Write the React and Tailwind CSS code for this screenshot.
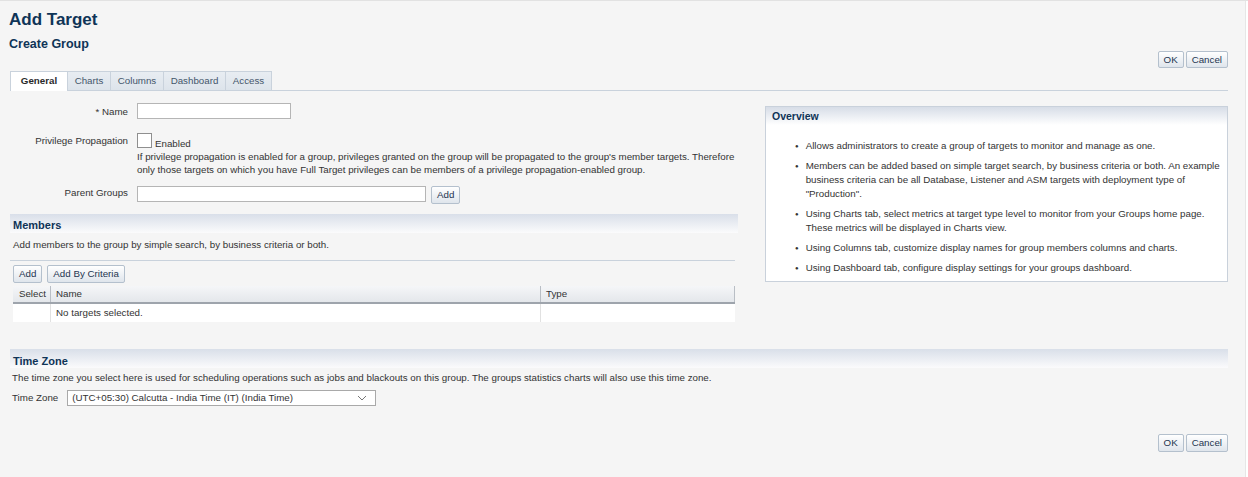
import React from 'react';

function Btn({ children, className = '' }) {
  return (
    <button
      className={`h-[17px] px-[5px] text-[9.75px] leading-none text-[#1f3550] border border-[#b4c0cd] rounded-[2px] bg-gradient-to-b from-[#ffffff] to-[#dfe5ec] ${className}`}
    >
      {children}
    </button>
  );
}

function SectionHeader({ title }) {
  return (
    <div className="h-[19px] flex items-center pl-[3px] bg-gradient-to-b from-[#d9dfe9] to-[#fbfbfc]">
      <span className="text-[11px] font-bold text-[#0f3457] pt-[4px]">{title}</span>
    </div>
  );
}

function Tabs() {
  const tabs = ['Charts', 'Columns', 'Dashboard', 'Access'];
  const widths = ['w-[43px]', 'w-[53px]', 'w-[62px]', 'w-[46px]'];
  return (
    <div className="flex items-end h-[20px] border-b border-[#c9d2dc]">
      <div className="w-[58px] h-[20px] bg-white border border-b-0 border-[#c9d2dc] flex items-center justify-center text-[9.75px] font-bold text-[#2a2a2a] -mb-px pb-px">
        General
      </div>
      {tabs.map((t, i) => (
        <div
          key={t}
          className={`${widths[i]} h-[19px] bg-gradient-to-b from-[#e8edf2] to-[#dde4eb] border-r border-t border-[#c9d2dc] flex items-center justify-center text-[9.75px] text-[#44566b]`}
        >
          {t}
        </div>
      ))}
    </div>
  );
}

const overview = [
  'Allows administrators to create a group of targets to monitor and manage as one.',
  'Members can be added based on simple target search, by business criteria or both. An example business criteria can be all Database, Listener and ASM targets with deployment type of "Production".',
  'Using Charts tab, select metrics at target type level to monitor from your Groups home page. These metrics will be displayed in Charts view.',
  'Using Columns tab, customize display names for group members columns and charts.',
  'Using Dashboard tab, configure display settings for your groups dashboard.',
];

export default function App() {
  return (
    <div
      className="w-[1248px] h-[477px] bg-[#f5f5f5] border-t border-[#e2e2e2] text-[#222] overflow-hidden flex"
      style={{ fontFamily: '"Liberation Sans", Arial, sans-serif' }}
    >
      <div className="flex-1 pl-[10px] pr-[17px]">
        {/* Title */}
        <div className="pt-[9px] -ml-px">
          <h1 className="text-[17px] leading-[20px] font-bold text-[#0f3457]">Add Target</h1>
          <h2 className="mt-[7px] text-[12.5px] leading-[15px] font-bold text-[#0f3457]">Create Group</h2>
        </div>

        <div className="flex justify-end gap-[2px] -mt-[1px]">
          <Btn>OK</Btn>
          <Btn>Cancel</Btn>
        </div>

        <div className="mt-[3px]">
          <Tabs />
        </div>

        <div className="flex gap-[27px]">
          {/* Left column */}
          <div className="w-[728px]">
            <div className="grid grid-cols-[118px_1fr] gap-x-[9px] text-[9.75px] text-[#333] mt-[12px]">
              <div className="text-right pt-[2px]">* Name</div>
              <div>
                <input className="w-[154px] h-[16px] bg-white border border-[#b5b5b5] block" />
              </div>

              <div className="text-right mt-[13px] pt-[1px]">Privilege Propagation</div>
              <div className="mt-[13px]">
                <div className="flex items-end gap-[3px]">
                  <span className="w-[15px] h-[15px] bg-white border border-[#8f8f8f] inline-block" />
                  <span className="leading-[11px] -mb-[1px]">Enabled</span>
                </div>
                <p className="mt-[2px] leading-[13px] whitespace-nowrap">
                  If privilege propagation is enabled for a group, privileges granted on the group will be propagated to the group's member targets. Therefore
                  <br />
                  only those targets on which you have Full Target privileges can be members of a privilege propagation-enabled group.
                </p>
              </div>

              <div className="text-right mt-[10px]">Parent Groups</div>
              <div className="mt-[10px] flex gap-[5px]">
                <input className="w-[289px] h-[16px] bg-white border border-[#b5b5b5] block" />
                <Btn className="h-[18px]">Add</Btn>
              </div>
            </div>

            {/* Members */}
            <div className="mt-[10px]">
              <SectionHeader title="Members" />
              <p className="text-[9.75px] text-[#333] mt-[5px] ml-[3px]">
                Add members to the group by simple search, by business criteria or both.
              </p>
              <div className="mt-[8px] mr-[3px] border-t border-[#c9d2dc]" />
              <div className="ml-[3px] mr-[3px] mt-[4px]">
                <div className="flex gap-[5px]">
                  <Btn className="h-[18px]">Add</Btn>
                  <Btn className="h-[18px]">Add By Criteria</Btn>
                </div>
                <div className="mt-[3px] text-[9.75px] bg-white">
                  <div className="flex h-[18px] bg-gradient-to-b from-[#f5f6f8] to-[#e4e7eb] border-b-2 border-[#9ea4ac] text-[#333]">
                    <div className="w-[38px] flex items-center justify-end pr-[4px] border-r border-[#b9bec5]">Select</div>
                    <div className="w-[490px] flex items-center pl-[5px] border-r border-[#b9bec5]">Name</div>
                    <div className="flex-1 flex items-center pl-[5px] border-r border-[#b9bec5]">Type</div>
                  </div>
                  <div className="flex h-[18px] text-[#333]">
                    <div className="w-[38px] border-r border-[#e1e1e1]" />
                    <div className="w-[490px] flex items-center pl-[5px] border-r border-[#e1e1e1]">No targets selected.</div>
                    <div className="flex-1" />
                  </div>
                </div>
              </div>
            </div>
          </div>

          {/* Overview */}
          <div className="flex-1 mt-[15px] self-start bg-white border border-[#c9d1db]">
            <div className="h-[18px] px-[6px] flex items-center bg-gradient-to-b from-[#d7dde7] to-white">
              <span className="text-[10.5px] font-bold text-[#0f3457] pt-[2px]">Overview</span>
            </div>
            <ul className="pl-[29px] pr-[4px] pt-[14px] pb-[6px] text-[9.75px] text-[#333]">
              {overview.map((t, i) => (
                <li key={i} className="flex gap-[7px] leading-[14px] mb-[6px] last:mb-0">
                  <span className="text-[6px] leading-[14px]">●</span>
                  <span>{t}</span>
                </li>
              ))}
            </ul>
          </div>
        </div>

        {/* Time Zone */}
        <div className="mt-[27px]">
          <SectionHeader title="Time Zone" />
          <p className="text-[9.75px] text-[#333] mt-[3px] ml-[2px]">
            The time zone you select here is used for scheduling operations such as jobs and blackouts on this group. The groups statistics charts will also use this time zone.
          </p>
          <div className="flex items-center gap-[9px] mt-[4px] ml-[2px] text-[9.75px] text-[#333]">
            <span>Time Zone</span>
            <div className="w-[309px] h-[16px] bg-white border border-[#a9a9a9] flex items-center justify-between pl-[4px] pr-[8px]">
              <span>(UTC+05:30) Calcutta - India Time (IT) (India Time)</span>
              <svg width="10" height="6" viewBox="0 0 10 6" fill="none" stroke="#777" strokeWidth="1">
                <path d="M1 1l4 4 4-4" />
              </svg>
            </div>
          </div>
        </div>

        <div className="flex justify-end gap-[2px] mt-[28px]">
          <Btn className="h-[18px]">OK</Btn>
          <Btn className="h-[18px]">Cancel</Btn>
        </div>
      </div>
      <div className="w-[3px] bg-white border-l border-[#e6e6e6]" />
    </div>
  );
}
